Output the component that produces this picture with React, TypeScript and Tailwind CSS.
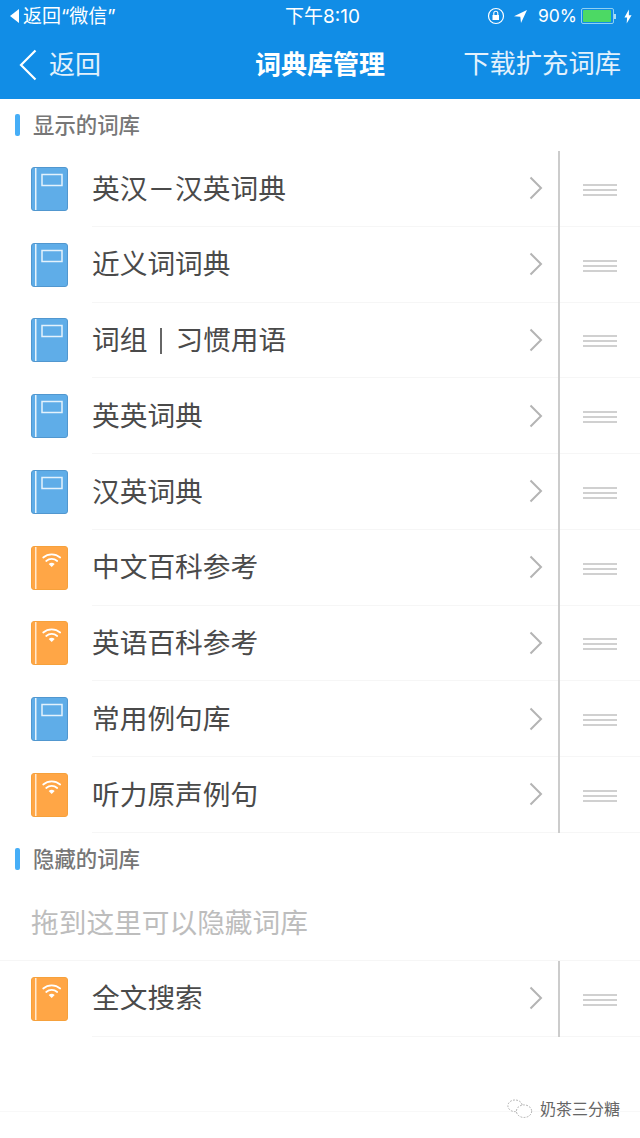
import React from "react";

const FF = "font-['Inter','Noto_Sans_CJK_SC',sans-serif]";

function BookIcon({ kind }: { kind: "blue" | "orange" }) {
  if (kind === "blue") {
    return (
      <svg width="37" height="44" viewBox="0 0 37 44" className="shrink-0">
        <rect x="0.5" y="0.5" width="36" height="43" rx="2.5" fill="#5fade8" stroke="#5197cf" />
        <rect x="4" y="1" width="1.5" height="42" fill="#e6f3fc" />
        <rect x="11" y="7.5" width="20" height="11" fill="none" stroke="#e4f2fc" strokeWidth="1.5" />
      </svg>
    );
  }
  return (
    <svg width="37" height="44" viewBox="0 0 37 44" className="shrink-0">
      <rect x="0.5" y="0.5" width="36" height="43" rx="2.5" fill="#ffa646" stroke="#f6a13c" />
      <rect x="4" y="1" width="1.5" height="42" fill="#ffe9cf" />
      <path d="M12.2 11.5a13 13 0 0 1 17 0" fill="none" stroke="#fff" strokeWidth="1.7" strokeLinecap="round" />
      <path d="M15.2 15a8.4 8.4 0 0 1 11 0" fill="none" stroke="#fff" strokeWidth="1.7" strokeLinecap="round" />
      <path d="M20.7 21l-3-3a4.6 4.6 0 0 1 6 0z" fill="#fff" />
    </svg>
  );
}

function Row({ label, kind, h = "h-[76px]" }: { label: React.ReactNode; kind: "blue" | "orange"; h?: string }) {
  return (
    <div className={`flex items-center ${h}`}>
      <div className="pl-[31px] pr-[24px] shrink-0 flex items-center">
        <BookIcon kind={kind} />
      </div>
      <div className="flex-1 self-stretch flex items-center border-b border-[#f6f6f6] pr-[15px]">
        <span className="flex-1 flex items-center pt-[2px] text-[27.7px] leading-none text-[#4a4a4a]">{label}</span>
        <svg width="14" height="24" viewBox="0 0 14 24">
          <path d="M1.5 1.5L12 12L1.5 22.5" fill="none" stroke="#b4b4b4" strokeWidth="2" />
        </svg>
      </div>
      <div className="w-[2px] self-stretch bg-[#cccccc] shrink-0" />
      <div className="w-[80px] self-stretch flex flex-col items-center justify-center gap-[3px] pt-[3px] border-b border-[#f6f6f6] shrink-0">
        <div className="w-[34px] h-[2px] bg-[#d0d0d0]" />
        <div className="w-[34px] h-[2px] bg-[#d0d0d0]" />
        <div className="w-[34px] h-[2px] bg-[#d0d0d0]" />
      </div>
    </div>
  );
}

function SectionTitle({ text, h }: { text: string; h: string }) {
  return (
    <div className={`flex items-center pl-[15px] gap-[13px] ${h}`}>
      <div className="w-[5px] h-[22px] rounded-[2px] bg-[#46aef7]" />
      <span className="pt-[2px] text-[21.4px] leading-none font-medium text-[#777777]">{text}</span>
    </div>
  );
}

const rows: { label: React.ReactNode; kind: "blue" | "orange"; id: string }[] = [
  { id: "a", label: "英汉－汉英词典", kind: "blue" },
  { id: "b", label: "近义词词典", kind: "blue" },
  {
    id: "c",
    label: (
      <>
        <span>词组</span>
        <span className="w-[2px] h-[26px] bg-[#666666] ml-[13px] mr-[13px]" />
        <span>习惯用语</span>
      </>
    ),
    kind: "blue",
  },
  { id: "d", label: "英英词典", kind: "blue" },
  { id: "e", label: "汉英词典", kind: "blue" },
  { id: "f", label: "中文百科参考", kind: "orange" },
  { id: "g", label: "英语百科参考", kind: "orange" },
  { id: "h", label: "常用例句库", kind: "blue" },
  { id: "i", label: "听力原声例句", kind: "orange" },
];

export default function App() {
  return (
    <div className={`w-[640px] h-[1138px] bg-white overflow-hidden relative ${FF}`}>
      <div className="h-[99px] bg-[#118de6] text-white flex flex-col">
        <div className="h-[32px] flex items-center pl-[9px] pr-[8px] text-[19px] leading-none">
          <div className="flex-1 flex items-center gap-[3px]">
            <svg width="11" height="16" viewBox="0 0 11 16"><path d="M10 1v14L1 8z" fill="#fff" /></svg>
            <span>返回“微信”</span>
          </div>
          <span className="w-[80px] text-center whitespace-nowrap translate-x-[2px]">下午8:10</span>
          <div className="flex-1 flex items-center justify-end">
            <svg width="18" height="18" viewBox="0 0 18 18" className="mr-[8px]">
              <circle cx="9" cy="9" r="7.5" fill="none" stroke="#fff" strokeWidth="1.2" />
              <rect x="5.5" y="8" width="6.5" height="5" fill="#fff" />
              <path d="M6.8 8V6.3a2 2 0 0 1 4 0V8" fill="none" stroke="#fff" strokeWidth="1.1" />
            </svg>
            <svg width="15" height="15" viewBox="0 0 15 15" className="mr-[10px]">
              <path d="M14 1L1 7.2l6.3.6.7 6.2z" fill="#fff" />
            </svg>
            <span className="mr-[4px] text-[17.5px]">90%</span>
            <div className="w-[33px] h-[16px] rounded-[2px] border border-[#8fd0f2] p-[1px] flex">
              <div className="w-[28px] h-full bg-[#4cd964] rounded-[1px]" />
            </div>
            <div className="w-[2px] h-[5px] bg-[#a9dcf7] mr-[8px]" />
            <svg width="8" height="15" viewBox="0 0 9 16"><path d="M5.5 0L0.5 9h3L3 16l5.5-9.5h-3z" fill="#fff" /></svg>
          </div>
        </div>
        <div className="flex-1 flex items-center pl-[19px] pr-[19px] pb-[2px] relative">
          <svg width="18" height="32" viewBox="0 0 18 32" className="mr-[12px]">
            <path d="M16.5 1.5L2 16l14.5 14.5" fill="none" stroke="#fff" strokeWidth="2.2" />
          </svg>
          <span className="text-[26px] leading-none text-[#e3f1fc]">返回</span>
          <span className="flex-1 text-center text-[26px] leading-none font-bold absolute inset-x-0 pointer-events-none">词典库管理</span>
          <span className="ml-auto text-[26.3px] leading-none text-[#e3f1fc]">下载扩充词库</span>
        </div>
      </div>

      <SectionTitle text="显示的词库" h="h-[52px]" />
      <div>
        {rows.map((r) => (
          <Row key={r.id} label={r.label} kind={r.kind} h="h-[75.75px]" />
        ))}
      </div>
      <SectionTitle text="隐藏的词库" h="h-[52px]" />
      <div className="h-[76px] pl-[31px] pt-[3px] flex items-center border-b border-[#f6f6f6]">
        <span className="text-[27.7px] leading-none text-[#bdbdbd]">拖到这里可以隐藏词库</span>
      </div>
      <Row label="全文搜索" kind="orange" />
      <div className="h-[75px] border-b border-[#f8f8f8]" />

      <div className="absolute left-[507px] top-[1098px] flex items-center gap-[7px] text-[#666666]">
        <svg width="26" height="21" viewBox="0 0 29 22" fill="none" stroke="#a5a5a5" strokeWidth="1" strokeDasharray="2 1.5">
          <ellipse cx="9" cy="8" rx="8" ry="6.5" />
          <ellipse cx="19" cy="14" rx="8.5" ry="7" fill="#fff" />
        </svg>
        <span className="text-[16px] leading-none">奶茶三分糖</span>
      </div>
    </div>
  );
}
